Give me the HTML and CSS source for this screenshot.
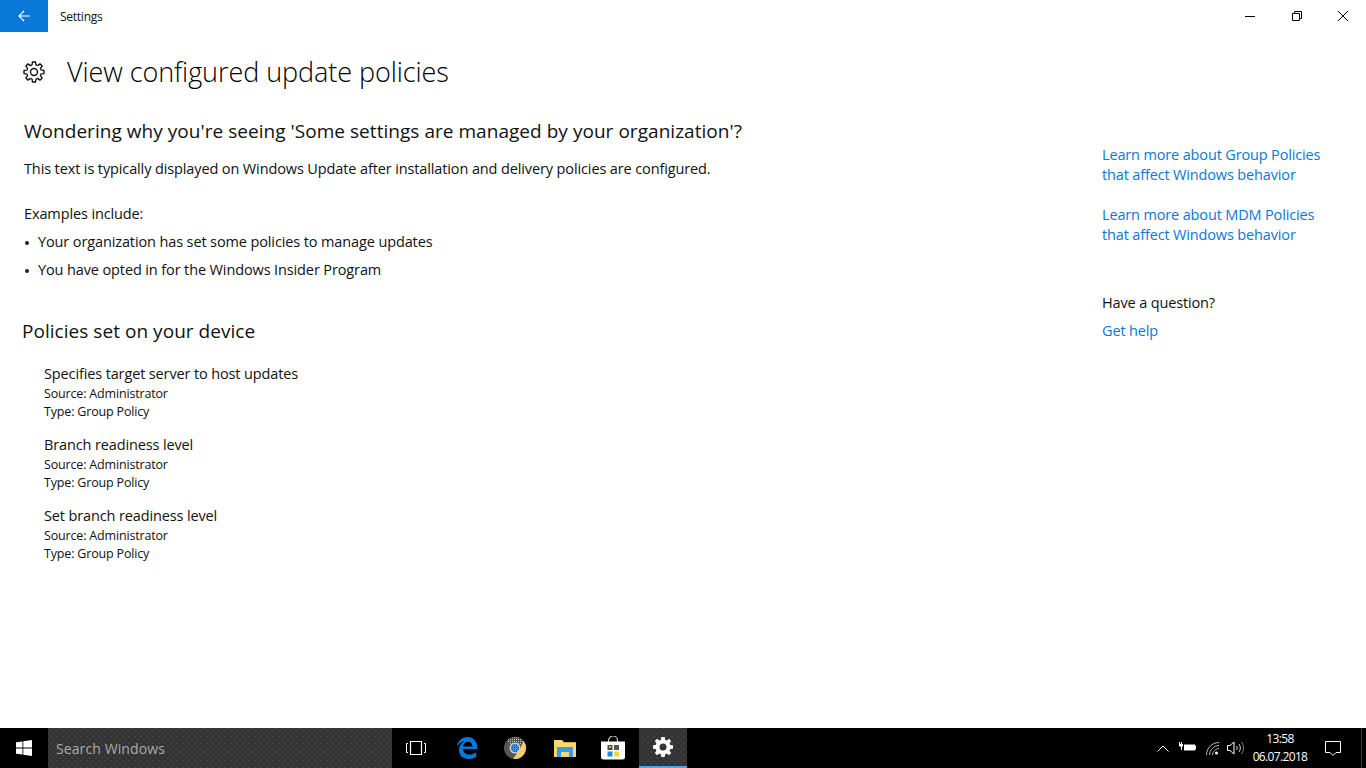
FILE: index.html
```html
<!DOCTYPE html>
<html lang="en">
<head>
<meta charset="utf-8">
<title>Settings</title>
<link rel="stylesheet" href="styles.css">
</head>
<body>
<div class="window">
  <header class="titlebar">
    <div class="back"><svg width="16" height="16" viewBox="0 0 16 16"><path d="M14 8H3M8 3L3 8l5 5" fill="none" stroke="#fff" stroke-width="1.2"/></svg></div>
    <span class="apptitle">Settings</span>
    <div class="winctrls">
      <svg class="ctrl" width="46" height="32" viewBox="0 0 46 32"><path d="M17 16.500h10" stroke="#000" fill="none"/></svg>
      <svg class="ctrl" width="46" height="32" viewBox="0 0 46 32"><path d="M18.500 13.500h7v7h-7zM20.500 13.500v-2h7v7h-2" stroke="#000" fill="none"/></svg>
      <svg class="ctrl" width="46" height="32" viewBox="0 0 46 32"><path d="M18 11l10 10M28 11L18 21" stroke="#000" fill="none"/></svg>
    </div>
  </header>
  <div class="pagehead">
    <svg class="gear" width="22" height="22" viewBox="0 0 24 24"><defs><path id="tooth" d="M9.930 4.270L10.280 1.140H13.720L14.070 4.270L16 5.070" fill="none" stroke="#111" stroke-width="1.500" stroke-linejoin="round"/></defs><use href="#tooth"/><use href="#tooth" transform="rotate(45 12 12)"/><use href="#tooth" transform="rotate(90 12 12)"/><use href="#tooth" transform="rotate(135 12 12)"/><use href="#tooth" transform="rotate(180 12 12)"/><use href="#tooth" transform="rotate(225 12 12)"/><use href="#tooth" transform="rotate(270 12 12)"/><use href="#tooth" transform="rotate(315 12 12)"/><circle cx="12" cy="12" r="3.800" fill="none" stroke="#111" stroke-width="1.500"/></svg>
    <h1>View configured update policies</h1>
  </div>
  <div class="content">
    <main class="main">
      <h2 class="q">Wondering why you're seeing 'Some settings are managed by your organization'?</h2>
      <p class="lead">This text is typically displayed on Windows Update after installation and delivery policies are configured.</p>
      <p class="examples">Examples include:</p>
      <ul class="bullets">
        <li>Your organization has set some policies to manage updates</li>
        <li>You have opted in for the Windows Insider Program</li>
      </ul>
      <h2 class="policies">Policies set on your device</h2>
      <section class="policy"><h3>Specifies target server to host updates</h3><div>Source: Administrator</div><div>Type: Group Policy</div></section>
      <section class="policy"><h3>Branch readiness level</h3><div>Source: Administrator</div><div>Type: Group Policy</div></section>
      <section class="policy"><h3>Set branch readiness level</h3><div>Source: Administrator</div><div>Type: Group Policy</div></section>
    </main>
    <aside class="side">
      <a class="link">Learn more about Group Policies<br>that affect Windows behavior</a>
      <a class="link">Learn more about MDM Policies<br>that affect Windows behavior</a>
      <p class="ask">Have a question?</p>
      <a class="link help">Get help</a>
    </aside>
  </div>
</div>
<footer class="taskbar">
  <div class="tb start"><svg width="16" height="16" viewBox="0 0 16 16"><path fill="#fff" d="M0 2.300l6.500-.9v6.200H0zM7.300 1.300L16 0v7.600H7.300zM0 8.400h6.500v6.200L0 13.700zM7.300 8.400H16V16l-8.700-1.300z"/></svg></div>
  <div class="search">Search Windows</div>
  <div class="tb"><svg width="20" height="14" viewBox="0 0 20 14"><g fill="none" stroke="#fff"><path d="M4.500 .5h11v13h-11z" stroke-width="1.200"/><path d="M2 2.500H.5v9H2M18 2.500h1.500v9H18"/></g></svg></div>
  <div class="tb gap3"><svg width="22" height="22" viewBox="0 0 22 22"><path fill="#0a78d7" d="M11.500 0C17.500 0 21.500 4.500 21.500 12H7c.2 3.300 2.700 5.600 6.200 5.600 2.700 0 5-.9 7-2.300v4.800c-2 1.200-4.600 1.900-7.700 1.900C6.500 22 3 18.200 3 12.800 3 9 5 6 8.500 4.300 5.500 4.500 3 6.500 .8 9.500 1.800 4 6 0 11.500 0zM7.200 9.400h9.300C16.400 6.700 14.600 4.800 12 4.800S7.600 6.700 7.200 9.400z"/></svg></div>
  <div class="tb"><svg width="22" height="22" viewBox="0 0 22 22"><defs><pattern id="dy" width="2" height="2" patternUnits="userSpaceOnUse"><rect width="2" height="2" fill="#55544f"/><rect width="1" height="1" fill="#e8c766"/></pattern><pattern id="db" width="2" height="2" patternUnits="userSpaceOnUse"><rect width="2" height="2" fill="#3f8fdc"/><rect width="1" height="1" fill="#1f5f9f"/></pattern></defs><circle cx="11" cy="11" r="11" fill="#57564f"/><path d="M3 3.500A11 11 0 0 1 19.500 4L15 9H8z" fill="url(#dy)"/><path d="M19.500 4A11 11 0 0 1 9 21.800L15.500 13z" fill="#f2cf62"/><circle cx="11" cy="11" r="5.500" fill="#cfd3d8"/><circle cx="11" cy="11" r="4.200" fill="url(#db)"/></svg></div>
  <div class="tb gap2"><svg width="22" height="18" viewBox="0 0 22 18"><path fill="#f8d675" d="M0 1h8l2 2h12v15H0z"/><path fill="#d9a93f" d="M0 4h9l1-1h12v1H0z"/><path fill="#3f9ae0" d="M3 8h16v10h-4v-5H7v5H3z"/></svg></div>
  <div class="tb"><svg width="24" height="24" viewBox="0 0 24 24"><path d="M7.500 6V4.500a4.500 4.500 0 0 1 9 0V6" fill="none" stroke="#ccc" stroke-width="1.200"/><path fill="#fff" d="M0 5.500h24V21a2.500 2.500 0 0 1-2.500 2.500h-19A2.500 2.500 0 0 1 0 21z"/><path fill="#4a4a4a" d="M6.500 9h5v5h-5z"/><path fill="#f2a53a" d="M8 10h2v2H8z"/><path fill="#555" d="M13 9h5v5h-5z"/><path fill="#1c8ce0" d="M6.500 15.500h5v5h-5z"/><path fill="#f6cf47" d="M13 15.500h5v5h-5z"/></svg></div>
  <div class="tb active gap2"><svg width="20" height="20" viewBox="0 0 20 20"><path fill="#fff" fill-rule="evenodd" d="M8.300 0h3.400l.4 2.700 1.700.7L16 1.800l2.200 2.200-1.600 2.200.7 1.700 2.700.4v3.400l-2.700.4-.7 1.700 1.600 2.200-2.200 2.200-2.200-1.600-1.700.7-.4 2.700H8.300l-.4-2.700-1.700-.7L4 18.200 1.800 16l1.600-2.200-.7-1.700L0 11.700V8.300l2.700-.4.7-1.700L1.800 4 4 1.800l2.200 1.600 1.700-.7zM10 6.500a3.500 3.500 0 1 0 0 7 3.500 3.500 0 0 0 0-7z"/></svg></div>
  <div class="tray">
    <svg width="12" height="7" viewBox="0 0 12 7"><path d="M.5 6.500l5.500-5.500 5.500 5.500" fill="none" stroke="#fff"/></svg>
    <svg class="battery" width="17" height="12" viewBox="0 0 17 12"><path fill="#fff" d="M0 0h1v2h1V0h1v2h1v2L3 5v3H2V5L0 4zM5 2.500h11v1h1v4h-1v1H5z"/></svg>
    <svg class="wifi" width="13" height="13" viewBox="0 0 13 13"><g fill="none" stroke="#bbb"><path d="M.5 13C.5 6 6 .5 13 .5M3.500 13c0-5 4.500-9.500 9.500-9.500M6.500 13c0-3 3-6.500 6.500-6.500"/></g><circle cx="10.500" cy="11" r="1.500" fill="#fff"/></svg>
    <svg class="vol" width="17" height="14" viewBox="0 0 17 14"><g fill="none" stroke="#fff"><path d="M.5 4.500h2.500l4-3.500v12l-4-3.500H.5z"/><path d="M9.500 5c1 1.300 1 2.700 0 4M12 3c1.800 2.500 1.800 5.500 0 8" stroke="#ccc"/><path d="M14.500 1c2.700 3.600 2.700 8.400 0 12" stroke="#888"/></g></svg>
    <div class="clock"><div>13:58</div><div>06.07.2018</div></div>
    <svg class="notify" width="16" height="15" viewBox="0 0 16 15"><path d="M.5 .5h15v11h-4.500l-3 3-3-3H.5z" fill="none" stroke="#fff"/></svg>
    <div class="showdesk"></div>
  </div>
</footer>
</body>
</html>
```

FILE: styles.css
```css
html, body { margin: 0; padding: 0; }
body {
  width: 1366px; height: 768px; overflow: hidden; background: #fff;
  font-family: "Open Sans", "Noto Sans", sans-serif; color: #111;
  display: flex; flex-direction: column;
}
.window { height: 728px; display: flex; flex-direction: column; }
.titlebar { height: 32px; display: flex; align-items: center; }
.back { width: 48px; height: 32px; background: #0a78d7; display: flex; align-items: center; justify-content: center; }
.apptitle { margin-left: 12px; font-size: 12px; letter-spacing: -.25px; }
.winctrls { margin-left: auto; display: flex; }
.ctrl { display: block; }
.pagehead { height: 56px; padding-left: 23px; display: flex; align-items: center; margin-top: 12px; margin-bottom: 16px; }
.gear { flex: none; }
h1 { margin: 0 0 0 22px; font-size: 27px; font-weight: 300; line-height: 40px; color: #000; letter-spacing: -.07px; }
.content { display: flex; flex: 1; }
.main { width: 1102px; padding-left: 24px; box-sizing: border-box; }
h2 { margin: 0; font-weight: 400; font-size: 19px; line-height: 28px; letter-spacing: .04px; }
.q { margin-top: 1px; }
p { margin: 0; }
.lead, .examples, .bullets li { font-size: 14.500px; line-height: 20px; letter-spacing: -.12px; }
.lead { margin-top: 14px; }
.examples { margin-top: 25px; }
.bullets { list-style: none; margin: 8px 0 0; padding: 0; }
.bullets li { padding-left: 14px; position: relative; margin-bottom: 8px; }
.bullets li::before { content: ""; position: absolute; left: 1px; top: 8.500px; width: 4px; height: 4px; border-radius: 50%; background: #222; }
.policies { margin-top: 37px; margin-left: -2px; }
.policy { margin-left: 20px; font-size: 12.500px; line-height: 18px; letter-spacing: -.17px; margin-bottom: 14px; }
.policies + .policy { margin-top: 19px; }
h3 { margin: 0 0 1px; font-weight: 400; font-size: 14.500px; line-height: 20px; letter-spacing: -.13px; }
.side { flex: 1; padding-top: 29px; font-size: 14.500px; line-height: 20px; letter-spacing: -.15px; }
.link { display: block; color: #0a78d7; margin-bottom: 20px; }
.ask { margin-top: 48px; }
.help { margin-top: 8px; }
.taskbar { height: 40px; background: #000; display: flex; align-items: stretch; color: #fff; }
.tb { width: 48px; display: flex; align-items: center; justify-content: center; box-sizing: border-box; flex: none; }
.gap3 { margin-left: 3px; }
.gap2 { margin-left: 2px; }
.search, .tb.active {
  background-color: #333;
  background-image: radial-gradient(circle, #4e4e4e .6px, transparent .8px), radial-gradient(circle, #4e4e4e .6px, transparent .8px);
  background-size: 6px 6px; background-position: 0 0, 3px 3px;
}
.search {
  width: 344px; flex: none; box-sizing: border-box; padding-left: 8px; display: flex; align-items: center;
  color: #aaa; font-size: 14px; letter-spacing: .1px;
}
.tb.active { border-bottom: 2px solid #4fa6e3; }
.tray { margin-left: auto; display: flex; align-items: center; }
.battery { margin-left: 10px; }
.wifi { margin-left: 10px; }
.vol { margin-left: 8px; }
.clock { margin-left: 5px; width: 62px; text-align: center; font-size: 12px; line-height: 18px; letter-spacing: -.65px; }
.notify { margin-left: 14px; }
.showdesk { width: 1px; height: 40px; background: #3a3a3a; margin: 0 4px 0 20px; }
```
